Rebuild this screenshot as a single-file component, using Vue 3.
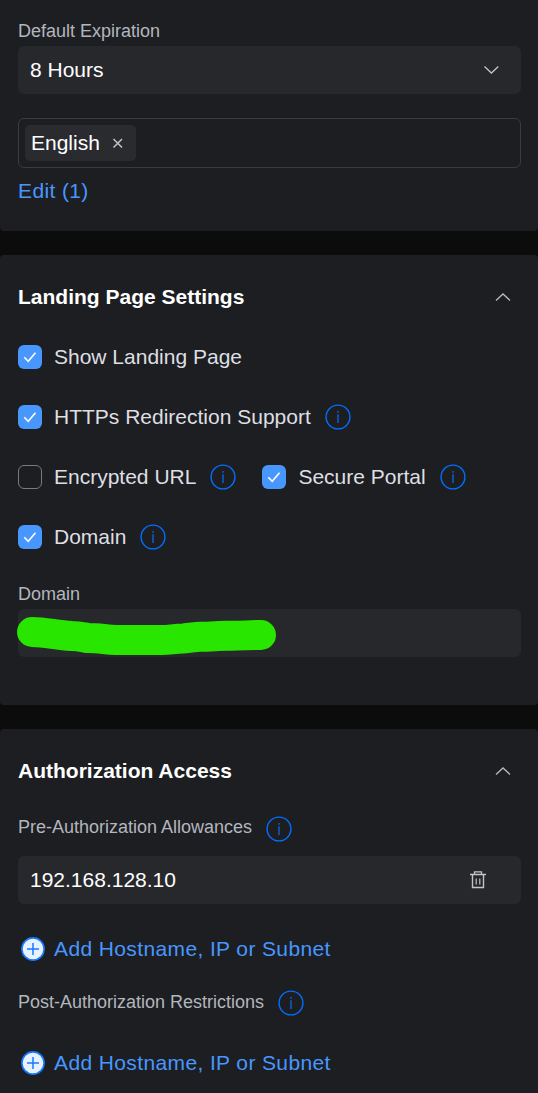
<script setup>
import { h } from 'vue'

const InfoIcon = () =>
  h('svg', { class: 'info', width: 26, height: 26, viewBox: '0 0 26 26', fill: 'none' }, [
    h('circle', { cx: 13, cy: 13, r: 11.9, stroke: '#006fff', 'stroke-width': 1.4 }),
    h('path', { d: 'M13 10.3V19', stroke: '#0a5fd0', 'stroke-width': 1.5 }),
    h('path', { d: 'M13 7V8.7', stroke: '#0a5fd0', 'stroke-width': 1.5 }),
  ])

const PlusIcon = () =>
  h('svg', { width: 24, height: 24, viewBox: '0 0 24 24', fill: 'none' }, [
    h('circle', { cx: 12, cy: 12, r: 11.1, fill: '#e8f1ff', stroke: '#1479ff', 'stroke-width': 1.6 }),
    h('path', { d: 'M12 6V18M6 12H18', stroke: '#1479ff', 'stroke-width': 1.5 }),
  ])

const ChevronUp = () =>
  h('svg', { width: 16, height: 10, viewBox: '0 0 16 10', fill: 'none' }, [
    h('path', { d: 'M1 8.5L8 2L15 8.5', stroke: '#b9babd', 'stroke-width': 1.3 }),
  ])

const Checkbox = (props) =>
  h('span', { class: ['check', { on: props.on }] }, props.on
    ? [h('svg', { width: 24, height: 24, viewBox: '0 0 24 24', fill: 'none' }, [
        h('path', { d: 'M6.3 12.2L10.2 16.2L17.5 7.8', stroke: '#fff', 'stroke-width': 1.6 }),
      ])]
    : [])
Checkbox.props = ['on']

const rows = [
  [{ text: 'Show Landing Page', on: true }],
  [{ text: 'HTTPs Redirection Support', on: true, info: true }],
  [
    { text: 'Encrypted URL', on: false, info: true },
    { text: 'Secure Portal', on: true, info: true },
  ],
  [{ text: 'Domain', on: true, info: true }],
]
</script>

<template>
  <main class="page">
    <section class="panel general">
      <div class="label">Default Expiration</div>
      <div class="field select">
        <span>8 Hours</span>
        <svg width="16" height="10" viewBox="0 0 16 10" fill="none">
          <path d="M1.5 1.500L8.400 8L15.300 1.500" stroke="#c3c4c7" stroke-width="1.3" />
        </svg>
      </div>
      <div class="tags">
        <span class="tag">
          English
          <svg width="12" height="12" viewBox="0 0 12 12" fill="none">
            <path d="M1.500 2L10 10.500M10 2L1.500 10.500" stroke="#c3c4c7" stroke-width="1.5" />
          </svg>
        </span>
      </div>
      <a class="link edit">Edit (1)</a>
    </section>

    <section class="panel landing">
      <header>
        <h2>Landing Page Settings</h2>
        <ChevronUp />
      </header>
      <div v-for="(row, i) in rows" :key="i" class="row">
        <label v-for="item in row" :key="item.text" class="option">
          <Checkbox :on="item.on" />
          <span>{{ item.text }}</span>
          <InfoIcon v-if="item.info" />
        </label>
      </div>
      <div class="label domain-label">Domain</div>
      <div class="field domain">
        <svg class="scribble" width="260" height="42" viewBox="0 0 260 42" fill="none">
          <path
            d="M15 16C29 16 38 19 54.700 20C64 20 66 21.500 71.300 22C82 22 88 23.500 99.700 24H145C152 24 158 22.500 166 22.500C174 22 178 20.800 183 20.700C193 20.700 202 19.700 209.700 19.700C222 20 232 19 244 19"
            stroke="#28e600"
            stroke-width="30"
            stroke-linecap="round"
            stroke-linejoin="round"
          />
        </svg>
      </div>
    </section>

    <section class="panel access">
      <header>
        <h2>Authorization Access</h2>
        <ChevronUp />
      </header>
      <div class="label with-info pre"><span>Pre-Authorization Allowances</span><InfoIcon /></div>
      <div class="field host">
        <span>192.168.128.10</span>
        <svg width="18" height="20" viewBox="0 0 18 20" fill="none" stroke="#c3c4c7">
          <path d="M1 4.500H17M5.500 4V1.800H12.500V4" stroke-width="1.3" />
          <path d="M3.500 4.500V17.500H14.500V4.500" stroke-width="1.4" />
          <path d="M7.200 8.500V14.500M10.800 8.500V14.500" stroke-width="1.2" />
        </svg>
      </div>
      <a class="link add"><PlusIcon /><span>Add Hostname, IP or Subnet</span></a>
      <div class="label with-info post"><span>Post-Authorization Restrictions</span><InfoIcon /></div>
      <a class="link add second"><PlusIcon /><span>Add Hostname, IP or Subnet</span></a>
    </section>
  </main>
</template>

<style>
body {
  background: #0c0c0c;
}
</style>

<style scoped>
.page {
  box-sizing: border-box;
  width: 538px;
  height: 1093px;
  overflow: hidden;
  display: flex;
  flex-direction: column;
  gap: 24px;
  background: #0c0c0c;
  font: 21px/30px "Liberation Sans", Arial, sans-serif;
  color: #dedfe2;
}
.page :deep(svg) {
  display: block;
  flex: none;
}
.panel {
  box-sizing: border-box;
  flex: none;
  padding: 0 17px 0 18px;
  background: #1d1e22;
  border-radius: 4px;
}
.general {
  height: 231px;
  padding-top: 19px;
  border-radius: 0 0 4px 4px;
}
.landing {
  height: 450px;
}
.access {
  height: 364px;
  border-radius: 4px 4px 0 0;
}
.label {
  height: 24px;
  font-size: 18px;
  line-height: 24px;
  color: #b3b6bd;
}
.field {
  box-sizing: border-box;
  display: flex;
  align-items: center;
  justify-content: space-between;
  height: 48px;
  padding: 0 12px;
  border-radius: 6px;
  background: #27282c;
  color: #fff;
}
.select {
  margin-top: 3px;
  padding-right: 22px;
}
.tags {
  box-sizing: border-box;
  display: flex;
  align-items: center;
  height: 50px;
  margin-top: 24px;
  padding: 0 6px;
  border: 1px solid #3a3b3f;
  border-radius: 6px;
}
.tag {
  display: flex;
  align-items: center;
  gap: 12.5px;
  box-sizing: border-box;
  width: 111px;
  height: 36px;
  padding-left: 6px;
  border-radius: 5px;
  background: #2a2b2f;
  color: #fff;
}
.link {
  color: #4797ff;
  letter-spacing: 0.38px;
}
.edit {
  display: block;
  margin-top: 8px;
}
header {
  display: flex;
  align-items: center;
  justify-content: space-between;
  height: 84px;
  padding-right: 10px;
}
h2 {
  margin: 0;
  font-size: 21px;
  line-height: 30px;
  font-weight: 700;
  color: #fff;
}
.row {
  display: flex;
  gap: 26px;
  height: 24px;
  margin: 6px 0 36px;
}
.row + .row {
  margin-top: 0;
}
.option {
  display: flex;
  align-items: center;
}
.option :deep(.check) {
  box-sizing: border-box;
  width: 24px;
  height: 24px;
  margin-right: 12px;
  border: 1px solid #777a80;
  border-radius: 6px;
}
.option :deep(.check.on) {
  border: 0;
  background: #4797ff;
}
.option :deep(.info) {
  margin-left: 14px;
}
.domain-label {
  margin-top: -3px;
}
.domain {
  position: relative;
  margin-top: 3px;
}
.scribble {
  position: absolute;
  left: -1px;
  top: 7px;
}
.with-info {
  display: flex;
  align-items: center;
}
.with-info :deep(.info) {
  margin: 4px 0 0 14px;
}
.pre {
  margin-top: 2px;
}
.host {
  margin-top: 17px;
  padding-right: 34px;
}
.add {
  display: flex;
  align-items: center;
  gap: 9px;
  height: 30px;
  margin-top: 30px;
  padding-left: 3px;
}
.post {
  margin-top: 26px;
}
.post :deep(.info) {
  margin-top: 2px;
}
.second {
  margin-top: 34px;
}
</style>
